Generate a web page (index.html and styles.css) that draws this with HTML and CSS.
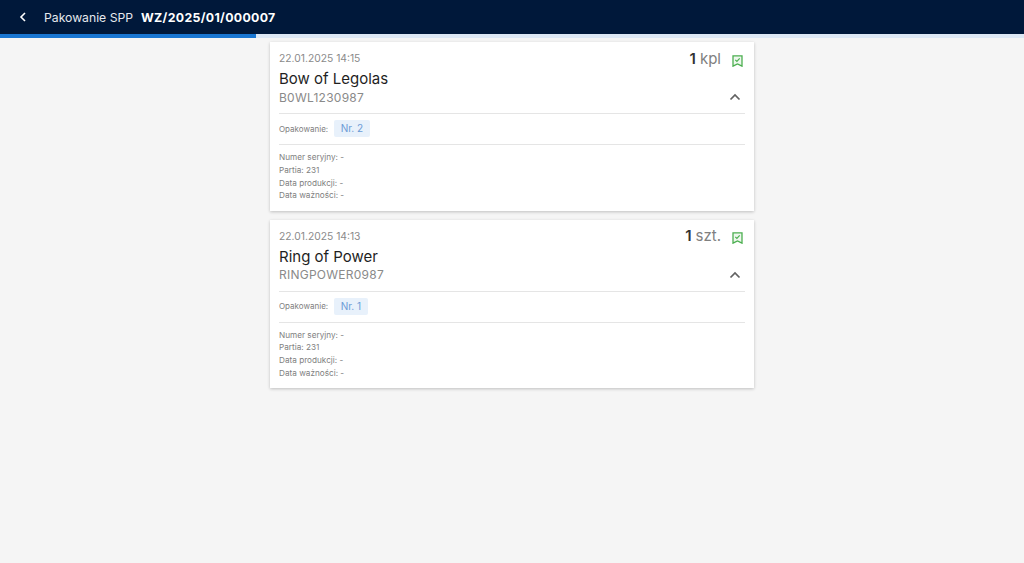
FILE: index.html
```html
<!DOCTYPE html>
<html lang="pl">
<head>
<meta charset="utf-8">
<title>Pakowanie SPP</title>
<link rel="stylesheet" href="styles.css">
</head>
<body>
<header class="topbar">
  <svg class="back" width="8" height="10" viewBox="0 0 8 10"><path d="M6 1 2 5l4 4" fill="none" stroke="#fff" stroke-width="1.6"/></svg>
  <span class="topbar-title">Pakowanie SPP</span>
  <strong class="topbar-doc">WZ/2025/01/000007</strong>
</header>
<div class="progress"><div class="progress-fill"></div></div>
<main class="list">
  <article class="card">
    <div class="card-top">
      <div class="head-row">
        <span class="date">22.01.2025 14:15</span>
        <div class="qty"><b>1</b> <span>kpl</span>
          <svg class="mark" width="11" height="12" viewBox="0 0 11 12"><path d="M1 .8h9v10.400L5.500 9 1 11.200z" fill="#eef7ee" stroke="#4caf50" stroke-width="1.300"/><path d="m3.300 4.800 1.600 1.600 2.800-3" fill="none" stroke="#4caf50" stroke-width="1.200"/></svg>
        </div>
      </div>
      <h2 class="name">Bow of Legolas</h2>
      <div class="code-row">
        <span class="code">B0WL1230987</span>
        <svg class="chev" width="12" height="8" viewBox="0 0 12 8"><path d="m1.500 6.500 4.500-4.500 4.500 4.500" fill="none" stroke="#616161" stroke-width="1.700"/></svg>
      </div>
    </div>
    <div class="pack-row"><span class="pack-label">Opakowanie:</span><span class="chip">Nr. 2</span></div>
    <div class="details">
      <div>Numer seryjny: -</div>
      <div>Partia: 231</div>
      <div>Data produkcji: -</div>
      <div>Data ważności: -</div>
    </div>
  </article>
  <article class="card">
    <div class="card-top">
      <div class="head-row">
        <span class="date">22.01.2025 14:13</span>
        <div class="qty"><b>1</b> <span>szt.</span>
          <svg class="mark" width="11" height="12" viewBox="0 0 11 12"><path d="M1 .8h9v10.400L5.500 9 1 11.200z" fill="#eef7ee" stroke="#4caf50" stroke-width="1.300"/><path d="m3.300 4.800 1.600 1.600 2.800-3" fill="none" stroke="#4caf50" stroke-width="1.200"/></svg>
        </div>
      </div>
      <h2 class="name">Ring of Power</h2>
      <div class="code-row">
        <span class="code">RINGPOWER0987</span>
        <svg class="chev" width="12" height="8" viewBox="0 0 12 8"><path d="m1.500 6.500 4.500-4.500 4.500 4.500" fill="none" stroke="#616161" stroke-width="1.700"/></svg>
      </div>
    </div>
    <div class="pack-row"><span class="pack-label">Opakowanie:</span><span class="chip">Nr. 1</span></div>
    <div class="details">
      <div>Numer seryjny: -</div>
      <div>Partia: 231</div>
      <div>Data produkcji: -</div>
      <div>Data ważności: -</div>
    </div>
  </article>
</main>
</body>
</html>
```
FILE: styles.css
```css
* { box-sizing: border-box; }
html, body { margin: 0; height: 100%; }
body { background: #f5f5f5; font-family: Inter, Roboto, sans-serif; color: #757575; overflow: hidden; }
.topbar { height: 34px; background: #00183a; display: flex; align-items: center; padding-left: 19px; color: #fff; }
.back { margin-right: 17px; }
.topbar-title { font-size: 12.2px; color: #e6e9ee; margin-right: 8px; }
.topbar-doc { font-size: 12.3px; font-weight: 700; letter-spacing: .33px; }
.progress { height: 4px; background: #dde8f5; }
.progress-fill { height: 100%; width: 256px; background: #1976d2; }
.list { width: 484px; margin: 4px auto 0 270px; display: flex; flex-direction: column; gap: 9px; }
.card { background: #fff; box-shadow: 0 1px 3px rgba(0,0,0,.22); padding: 9px; height: 168.5px; }
.card-top { padding-bottom: 7px; border-bottom: 1px solid #e5e5e5; }
.head-row { display: flex; justify-content: space-between; align-items: center; height: 14px; }
.date { font-size: 10.3px; color: #8a8a8a; }
.qty { display: flex; align-items: center; gap: 4px; font-size: 15px; color: #808080; }
.qty b { color: #333; font-weight: 600; }
.mark { margin-left: 7px; margin-right: 2px; margin-top: 5px; }
.name { margin: 4px 0 0; font-size: 15px; line-height: 19px; font-weight: 400; color: #1f1f1f; }
.code-row { display: flex; justify-content: space-between; align-items: center; height: 18px; }
.code { font-size: 12px; color: #8a8a8a; letter-spacing: .25px; }
.chev { margin-right: 4px; }
.pack-row { display: flex; align-items: center; gap: 6px; padding: 6px 0 7px; border-bottom: 1px solid #e5e5e5; }
.pack-label { font-size: 8px; color: #808080; }
.chip { font-size: 10px; color: #6b9bd6; background: #e8f1fb; padding: 2px 6.500px; height: 17px; line-height: 13px; border-radius: 2px; }
.details { padding-top: 6px; font-size: 8.2px; line-height: 12.8px; color: #808080; }
```
